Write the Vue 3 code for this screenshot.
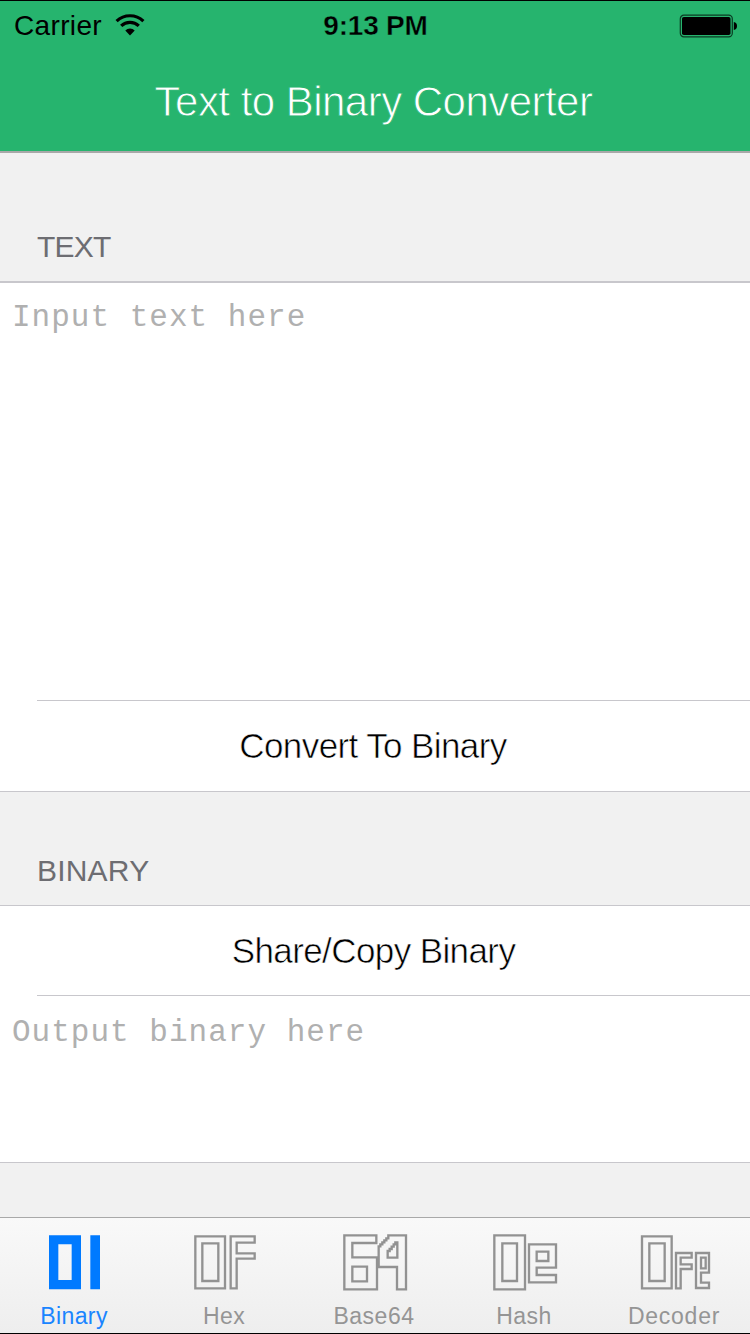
<script setup>
const tabs = [
  {
    label: 'Binary', active: true, spacing: 'snug',
    d: 'M147 91H243V253H147ZM175 118V225H215V118ZM271 91H300V253H271Z',
  },
  {
    label: 'Hex', spacing: 'snug',
    d: 'M136 94H225V250H136ZM157 115H205V228H157ZM242 94H314V113H260V145H314V161H260V250H242Z',
  },
  {
    label: 'Base64', spacing: 'open',
    d: 'M133 91H229V114H157V157H231V253H133ZM157 185H201V229H157ZM236 186V124H241V118H247V112H253V106H259V100H265V91H318V253H291V186ZM263 158V138H269V132H275V125H281V118H286V112H292V158Z',
  },
  {
    label: 'Hash', spacing: 'open',
    d: 'M133 91H225V253H133ZM157 115H201V228H157ZM237 118H318V188H260V210H318V232H237ZM260 140H295V168H260Z',
  },
  {
    label: 'Decoder', spacing: 'wide',
    d: 'M126 94H215V250H126ZM148 115H194V228H148ZM228 144H275V158H242V178H275V192H242V250H228ZM288 144H327V203H303V233H327V249H288ZM303 158H317V190H303Z',
  },
]
</script>

<template>
  <div class="screen">
    <header class="header">
      <div class="status">
        <div class="side">
          <span class="carrier">Carrier</span>
          <svg class="wifi" width="30" height="22" viewBox="0 0 30 22">
            <g fill="none" stroke="#000" stroke-width="3.2">
              <path d="M1.6 7.1A19.4 19.4 0 0 1 28.4 7.1" />
              <path d="M6.2 11.8A12.8 12.8 0 0 1 23.8 11.8" />
            </g>
            <path d="M15 21.4L10.3 16.4A6.5 6.5 0 0 1 19.7 16.4Z" />
          </svg>
        </div>
        <span class="clock">9:13 PM</span>
        <div class="side end">
          <svg class="battery" width="59" height="24" viewBox="0 0 59 24">
            <rect x="1.3" y="1.2" width="52" height="21.6" rx="3.6" fill="none" stroke="#0b3a23" stroke-width="1.2" />
            <rect x="3" y="3" width="48.5" height="18" rx="1.8" />
            <path d="M54.8 8Q58 8.4 58 12T54.8 16Z" />
          </svg>
        </div>
      </div>
      <h1 class="title">Text to Binary Converter</h1>
    </header>

    <h2 class="caption first">TEXT</h2>
    <section class="group thick">
      <div class="area input">Input text here</div>
      <div class="rule"></div>
      <div class="action convert">Convert To Binary</div>
    </section>

    <h2 class="caption second">BINARY</h2>
    <section class="group">
      <div class="action share">Share/Copy Binary</div>
      <div class="rule"></div>
      <div class="area output">Output binary here</div>
    </section>

    <nav class="tabs">
      <div v-for="tab in tabs" :key="tab.label" class="tab" :class="[{ active: tab.active }, tab.spacing]">
        <svg class="icon" width="150" height="84" viewBox="0 39 450 252">
          <path :d="tab.d" fill-rule="evenodd" />
        </svg>
        <span class="label">{{ tab.label }}</span>
      </div>
    </nav>
  </div>
</template>

<style>
body { margin: 0; }
</style>

<style scoped>
.screen {
  box-sizing: border-box;
  width: 750px;
  height: 1334px;
  display: flex;
  flex-direction: column;
  border-top: 1px solid #000;
  border-bottom: 1px solid #000;
  background: #f1f1f1;
  font-family: "Liberation Sans", Arial, sans-serif;
  overflow: hidden;
}
.header {
  height: 150px;
  flex: none;
  background: #26b46e;
  border-bottom: 2px solid #a8a8a8;
}
.status {
  display: flex;
  height: 50px;
  padding: 0 12px 0 14px;
  align-items: center;
  font-size: 28px;
}
.side { flex: 1; display: flex; align-items: center; }
.end { justify-content: flex-end; }
.battery { margin-bottom: 1px; }
.carrier { letter-spacing: 0.35px; }
.wifi { margin: 0 0 3px 13px; }
.clock { margin-right: 1px; font-weight: bold; letter-spacing: -0.2px; -webkit-text-stroke: 0.4px #26b46e; }
.title {
  margin: 24px 0 0;
  padding-right: 3px;
  font-size: 42px;
  line-height: 54px;
  font-weight: normal;
  letter-spacing: -0.53px;
  text-align: center;
  color: #fff;
  -webkit-text-stroke: 0.8px #26b46e;
}
.caption {
  box-sizing: border-box;
  flex: none;
  margin: 0;
  font-size: 30px;
  line-height: 34px;
  font-weight: normal;
  color: #6d6d72;
}
.first { height: 128px; padding: 77px 0 0 37px; letter-spacing: -0.8px; }
.second { height: 113px; padding: 62px 0 0 37px; letter-spacing: 0.2px; }
.group {
  flex: none;
  background: #fff;
  border-top: 1px solid #c8c7cc;
  border-bottom: 1px solid #c8c7cc;
}
.thick { border-top-width: 2px; }
.rule { height: 1px; margin-left: 37px; background: #c8c7cc; }
.area {
  box-sizing: border-box;
  padding-left: 12px;
  font-family: "Liberation Mono", "Courier New", monospace;
  font-size: 31px;
  line-height: 36px;
  letter-spacing: 1.02px;
  color: #b0b0b0;
}
.input { height: 417px; padding-top: 17px; }
.output { height: 166px; padding-top: 19px; }
.action {
  font-size: 35px;
  line-height: 90px;
  text-align: center;
  color: #000;
  letter-spacing: -0.6px;
  -webkit-text-stroke: 0.6px #fff;
}
.convert { padding-right: 4px; }
.share { height: 89px; padding-right: 3px; }
.tabs {
  display: flex;
  height: 115px;
  margin-top: auto;
  border-top: 1px solid #a9a9a9;
  background: linear-gradient(#f9f9f9, #eeeeee);
}
.tab {
  width: 150px;
  display: flex;
  flex-direction: column;
  color: #959595;
}
.icon { display: block; fill: none; stroke: #929292; stroke-width: 7; }
.label {
  width: 148px;
  font-size: 23px;
  line-height: 28px;
  text-align: center;
}
.snug .label { letter-spacing: 0.4px; }
.open .label { letter-spacing: 0.5px; }
.wide .label { letter-spacing: 0.75px; }
.active { color: #1a85ff; }
.active .icon { fill: #007aff; stroke: none; }
</style>
